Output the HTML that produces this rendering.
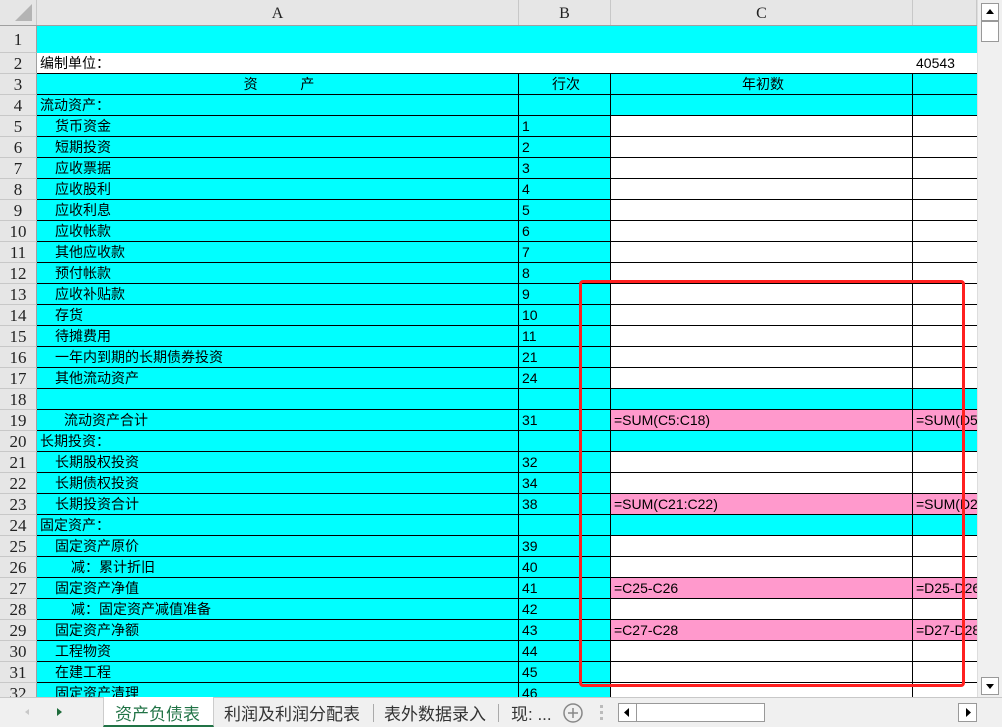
<!DOCTYPE html>
<html><head><meta charset="utf-8"><style>
*{box-sizing:border-box;margin:0;padding:0}
body{width:1002px;height:727px;overflow:hidden;background:#fff;position:relative;font-family:"Liberation Sans","Noto Sans CJK SC",sans-serif;font-size:14px;color:#000}
.hdr{position:absolute;top:0;left:0;height:26px;width:977px;background:#e6e6e6;border-bottom:1px solid #a0a0a0}
.hdr div{position:absolute;top:0;height:25px;border-right:1px solid #c8c8c8;font-family:"Liberation Serif",serif;font-size:16px;text-align:center;line-height:27px;color:#222}
.row{position:absolute;left:0;width:977px;height:21px}
.row div{position:absolute;top:0;height:21px;border-right:1px solid #000;border-bottom:1px solid #000;white-space:nowrap;overflow:hidden;line-height:21px;padding-left:3px;font-size:14px}
.row div.r{left:0;width:37px;background:#e6e6e6;border-right:1px solid #a0a0a0;border-bottom:1px solid #c8c8c8;font-family:"Liberation Serif",serif;font-size:17px;text-align:center;padding:0;color:#222}
.row div.a{left:37px;width:482px}
.row div.b{left:519px;width:92px}
.row div.cc{left:611px;width:302px}
.row div.d{left:913px;width:64px;border-right:none}
.c{background:#00ffff}.w{background:#fff}.p{background:#ff99cc}
.row div.i1{padding-left:18px}.row div.i2{padding-left:27px}.row div.i3{padding-left:34px}
.vs{position:absolute;left:977px;top:0;width:25px;height:697px;background:#f0f0f0;border-left:1px solid #ddd}
.bot{position:absolute;left:0;top:697px;width:1002px;height:30px;background:#f0f0f0;border-top:1px solid #c8c8c8;font-size:17px;color:#333}
.bot span{position:absolute;top:2px;white-space:nowrap}
</style></head><body>
<div class="hdr">
<div style="left:0;width:37px"><svg width="36" height="25" style="position:absolute;left:0;top:0"><polygon points="32,4 32,21 15,21" fill="#b4b4b4"/></svg></div>
<div style="left:37px;width:482px">A</div>
<div style="left:519px;width:92px">B</div>
<div style="left:611px;width:302px">C</div>
<div style="left:913px;width:64px"></div>
</div>

<div class="row" style="top:26px;height:27px"><div class="r" style="height:27px;line-height:27px">1</div><div class="c" style="left:37px;width:940px;height:27px;border:none"></div></div>
<div class="row" style="top:53px;height:21px"><div class="r" style="height:21px">2</div><div class="w" style="left:37px;width:876px;border-right:none">编制单位：</div><div class="d w">40543</div></div>

<div class="row" style="top:74px"><div class="r">3</div><div class="a c" style="text-align:center">资&nbsp;&nbsp;&nbsp;&nbsp;&nbsp;&nbsp;&nbsp;&nbsp;&nbsp;&nbsp;&nbsp;产</div><div class="b c" style="text-align:center">行次</div><div class="cc c" style="text-align:center">年初数</div><div class="d c"></div></div>
<div class="row" style="top:95px"><div class="r">4</div><div class="a c">流动资产：</div><div class="b c"></div><div class="cc c"></div><div class="d c"></div></div>
<div class="row" style="top:116px"><div class="r">5</div><div class="a c i1">货币资金</div><div class="b c">1</div><div class="cc w"></div><div class="d w"></div></div>
<div class="row" style="top:137px"><div class="r">6</div><div class="a c i1">短期投资</div><div class="b c">2</div><div class="cc w"></div><div class="d w"></div></div>
<div class="row" style="top:158px"><div class="r">7</div><div class="a c i1">应收票据</div><div class="b c">3</div><div class="cc w"></div><div class="d w"></div></div>
<div class="row" style="top:179px"><div class="r">8</div><div class="a c i1">应收股利</div><div class="b c">4</div><div class="cc w"></div><div class="d w"></div></div>
<div class="row" style="top:200px"><div class="r">9</div><div class="a c i1">应收利息</div><div class="b c">5</div><div class="cc w"></div><div class="d w"></div></div>
<div class="row" style="top:221px"><div class="r">10</div><div class="a c i1">应收帐款</div><div class="b c">6</div><div class="cc w"></div><div class="d w"></div></div>
<div class="row" style="top:242px"><div class="r">11</div><div class="a c i1">其他应收款</div><div class="b c">7</div><div class="cc w"></div><div class="d w"></div></div>
<div class="row" style="top:263px"><div class="r">12</div><div class="a c i1">预付帐款</div><div class="b c">8</div><div class="cc w"></div><div class="d w"></div></div>
<div class="row" style="top:284px"><div class="r">13</div><div class="a c i1">应收补贴款</div><div class="b c">9</div><div class="cc w"></div><div class="d w"></div></div>
<div class="row" style="top:305px"><div class="r">14</div><div class="a c i1">存货</div><div class="b c">10</div><div class="cc w"></div><div class="d w"></div></div>
<div class="row" style="top:326px"><div class="r">15</div><div class="a c i1">待摊费用</div><div class="b c">11</div><div class="cc w"></div><div class="d w"></div></div>
<div class="row" style="top:347px"><div class="r">16</div><div class="a c i1">一年内到期的长期债券投资</div><div class="b c">21</div><div class="cc w"></div><div class="d w"></div></div>
<div class="row" style="top:368px"><div class="r">17</div><div class="a c i1">其他流动资产</div><div class="b c">24</div><div class="cc w"></div><div class="d w"></div></div>
<div class="row" style="top:389px"><div class="r">18</div><div class="a c"></div><div class="b c"></div><div class="cc c"></div><div class="d c"></div></div>
<div class="row" style="top:410px"><div class="r">19</div><div class="a c i2">流动资产合计</div><div class="b c">31</div><div class="cc p">=SUM(C5:C18)</div><div class="d p">=SUM(D5:D18)</div></div>
<div class="row" style="top:431px"><div class="r">20</div><div class="a c">长期投资：</div><div class="b c"></div><div class="cc c"></div><div class="d c"></div></div>
<div class="row" style="top:452px"><div class="r">21</div><div class="a c i1">长期股权投资</div><div class="b c">32</div><div class="cc w"></div><div class="d w"></div></div>
<div class="row" style="top:473px"><div class="r">22</div><div class="a c i1">长期债权投资</div><div class="b c">34</div><div class="cc w"></div><div class="d w"></div></div>
<div class="row" style="top:494px"><div class="r">23</div><div class="a c i1">长期投资合计</div><div class="b c">38</div><div class="cc p">=SUM(C21:C22)</div><div class="d p">=SUM(D21:D22)</div></div>
<div class="row" style="top:515px"><div class="r">24</div><div class="a c">固定资产：</div><div class="b c"></div><div class="cc c"></div><div class="d c"></div></div>
<div class="row" style="top:536px"><div class="r">25</div><div class="a c i1">固定资产原价</div><div class="b c">39</div><div class="cc w"></div><div class="d w"></div></div>
<div class="row" style="top:557px"><div class="r">26</div><div class="a c i3">减：累计折旧</div><div class="b c">40</div><div class="cc w"></div><div class="d w"></div></div>
<div class="row" style="top:578px"><div class="r">27</div><div class="a c i1">固定资产净值</div><div class="b c">41</div><div class="cc p">=C25-C26</div><div class="d p">=D25-D26</div></div>
<div class="row" style="top:599px"><div class="r">28</div><div class="a c i3">减：固定资产减值准备</div><div class="b c">42</div><div class="cc w"></div><div class="d w"></div></div>
<div class="row" style="top:620px"><div class="r">29</div><div class="a c i1">固定资产净额</div><div class="b c">43</div><div class="cc p">=C27-C28</div><div class="d p">=D27-D28</div></div>
<div class="row" style="top:641px"><div class="r">30</div><div class="a c i1">工程物资</div><div class="b c">44</div><div class="cc w"></div><div class="d w"></div></div>
<div class="row" style="top:662px"><div class="r">31</div><div class="a c i1">在建工程</div><div class="b c">45</div><div class="cc w"></div><div class="d w"></div></div>
<div class="row" style="top:683px"><div class="r">32</div><div class="a c i1">固定资产清理</div><div class="b c">46</div><div class="cc w"></div><div class="d w"></div></div>

<div style="position:absolute;left:579px;top:280px;width:386px;height:407px;border:3px solid #ff2020;border-radius:4px"></div>
<div class="vs">
<div style="position:absolute;left:3px;top:3px;width:18px;height:18px;background:#fff;border:1px solid #999"><svg width="16" height="16"><polygon points="4,10 12,10 8,5" fill="#000"/></svg></div>
<div style="position:absolute;left:3px;top:21px;width:18px;height:21px;background:#fff;border:1px solid #999"></div>
<div style="position:absolute;left:3px;top:677px;width:18px;height:18px;background:#fff;border:1px solid #999"><svg width="16" height="16"><polygon points="4,6 12,6 8,11" fill="#000"/></svg></div>
</div>
<div class="bot">
<svg width="80" height="28" style="position:absolute;left:0;top:0"><polygon points="29,11 29,17 25,14" fill="#c8c8c8"/><polygon points="57,10 57,18 62,14" fill="#1e6b3a"/></svg>
<div style="position:absolute;left:103px;top:-1px;width:111px;height:30px;background:#fff;border-bottom:2px solid #217346;border-left:1px solid #ccc;border-right:1px solid #ccc"></div>
<span style="left:115px;color:#217346">资产负债表</span>
<span style="left:224px">利润及利润分配表</span>
<div style="position:absolute;left:373px;top:6px;width:1px;height:18px;background:#aaa"></div>
<span style="left:384px">表外数据录入</span>
<div style="position:absolute;left:498px;top:6px;width:1px;height:18px;background:#aaa"></div>
<span style="left:511px">现: ...</span>
<svg width="24" height="24" style="position:absolute;left:561px;top:3px"><circle cx="12" cy="12" r="9" fill="none" stroke="#888" stroke-width="1.5"/><path d="M7 12h10M12 7v10" stroke="#888" stroke-width="1.5"/></svg>
<div style="position:absolute;left:600px;top:7px;width:3px;height:15px;border-left:3px dotted #bbb"></div>
<div style="position:absolute;left:618px;top:5px;width:359px;height:19px;background:#f0f0f0"></div>
<div style="position:absolute;left:618px;top:5px;width:19px;height:19px;background:#fff;border:1px solid #999"><svg width="17" height="17"><polygon points="10,4 10,13 5,8.5" fill="#000"/></svg></div>
<div style="position:absolute;left:636px;top:5px;width:129px;height:19px;background:#fff;border:1px solid #999"></div>
<div style="position:absolute;left:958px;top:5px;width:19px;height:19px;background:#fff;border:1px solid #999"><svg width="17" height="17"><polygon points="7,4 7,13 12,8.5" fill="#000"/></svg></div>
</div>
</body></html>
